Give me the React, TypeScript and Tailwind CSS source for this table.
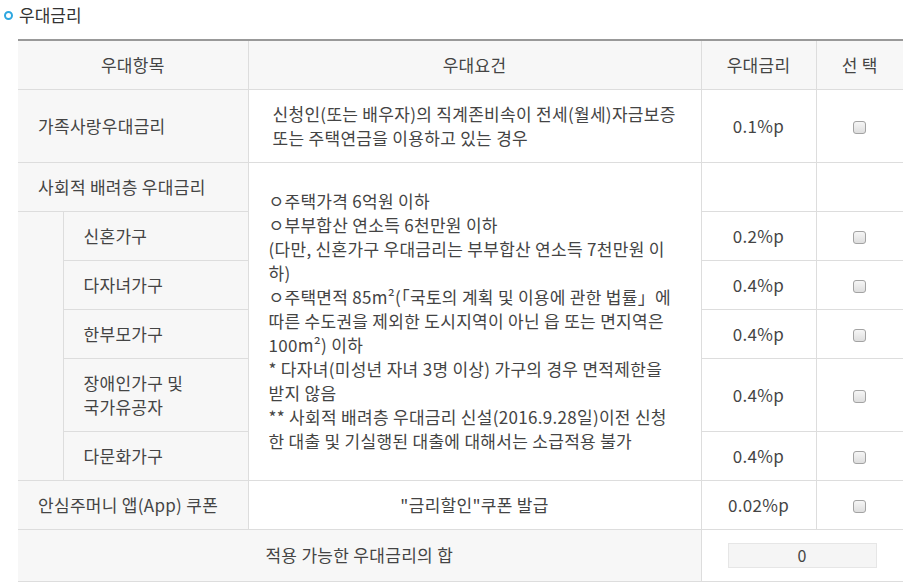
const FONT = { fontFamily: '"Noto Sans CJK KR", "Noto Sans", sans-serif' };

function Check() {
  return (
    <span className="inline-block w-[13px] h-[13px] rounded-[3px] border border-[#a3a3a3] bg-gradient-to-b from-[#f6f6f6] to-[#dedede] align-middle" />
  );
}

const SOCIAL = [
  { label: ["신혼가구"], rate: "0.2%p", h: "h-[49px]" },
  { label: ["다자녀가구"], rate: "0.4%p", h: "h-[49px]" },
  { label: ["한부모가구"], rate: "0.4%p", h: "h-[49px]" },
  { label: ["장애인가구 및", "국가유공자"], rate: "0.4%p", h: "h-[73px]" },
  { label: ["다문화가구"], rate: "0.4%p", h: "h-[49px]" },
];

const CONDITIONS = [
  "ㅇ주택가격 6억원 이하",
  "ㅇ부부합산 연소득 6천만원 이하",
  "(다만, 신혼가구 우대금리는 부부합산 연소득 7천만원 이",
  "하)",
  "ㅇ주택면적 85m²(「국토의 계획 및 이용에 관한 법률」에",
  "따른 수도권을 제외한 도시지역이 아닌 읍 또는 면지역은",
  "100m²) 이하",
  "* 다자녀(미성년 자녀 3명 이상) 가구의 경우 면적제한을",
  "받지 않음",
  "** 사회적 배려층 우대금리 신설(2016.9.28일)이전 신청",
  "한 대출 및 기실행된 대출에 대해서는 소급적용 불가",
];

export default function App() {
  return (
    <div className="w-[910px] h-[588px] bg-white text-[#444] overflow-hidden" style={FONT}>
      {/* title */}
      <div className="flex items-center h-[30px] pl-[4px] gap-[6px]">
        <span className="w-[9px] h-[9px] rounded-full border-[2.5px] border-[#2ea7e0] bg-white" />
        <span className="text-[17px] text-[#333] leading-[30px]">우대금리</span>
      </div>

      <table className="ml-[18px] mt-[9px] w-[885px] table-fixed border-collapse text-[17px] tracking-[0.3px] leading-[24px]">
        <colgroup>
          <col className="w-[45px]" />
          <col className="w-[185px]" />
          <col className="w-[453px]" />
          <col className="w-[115px]" />
          <col className="w-[87px]" />
        </colgroup>
        <thead>
          <tr className="h-[49px] border-t-2 border-t-[#999] bg-[#f7f7f7] border-b border-b-[#ddd]">
            <th colSpan={2} className="font-normal text-center border-r border-[#ddd]">우대항목</th>
            <th className="font-normal text-center border-r border-[#ddd]">우대요건</th>
            <th className="font-normal text-center border-r border-[#ddd]">우대금리</th>
            <th className="font-normal text-center">선 택</th>
          </tr>
        </thead>
        <tbody>
          <tr className="h-[73px] border-b border-[#ddd]">
            <td colSpan={2} className="bg-[#f7f7f7] px-5 border-r border-[#ddd]">가족사랑우대금리</td>
            <td className="pl-6 pr-4 border-r border-[#ddd] whitespace-nowrap">
              신청인(또는 배우자)의 직계존비속이 전세(월세)자금보증
              <br />또는 주택연금을 이용하고 있는 경우
            </td>
            <td className="text-center border-r border-[#ddd]">0.1%p</td>
            <td className="text-center"><Check /></td>
          </tr>
          <tr className="h-[49px] border-b border-[#ddd]">
            <td colSpan={2} className="bg-[#f7f7f7] px-5 border-r border-[#ddd]">사회적 배려층 우대금리</td>
            <td rowSpan={6} className="px-5 border-r border-[#ddd] align-middle">
              {CONDITIONS.map((l, i) => (
                <div key={i} className="whitespace-nowrap">{l}</div>
              ))}
            </td>
            <td className="border-r border-[#ddd]" />
            <td />
          </tr>
          {SOCIAL.map((s, i) => (
            <tr key={i} className={`${s.h} border-b border-[#ddd]`}>
              {i === 0 && (
                <td rowSpan={5} className="bg-[#f7f7f7] border-r border-[#ddd]" />
              )}
              <td className="bg-[#f7f7f7] px-5 border-r border-[#ddd]">
                {s.label.map((l, j) => (
                  <div key={j}>{l}</div>
                ))}
              </td>
              <td className="text-center border-r border-[#ddd]">{s.rate}</td>
              <td className="text-center"><Check /></td>
            </tr>
          ))}
          <tr className="h-[49px] border-b border-[#ddd]">
            <td colSpan={2} className="bg-[#f7f7f7] px-5 border-r border-[#ddd]">안심주머니 앱(App) 쿠폰</td>
            <td className="text-center border-r border-[#ddd]">"금리할인"쿠폰 발급</td>
            <td className="text-center border-r border-[#ddd]">0.02%p</td>
            <td className="text-center"><Check /></td>
          </tr>
          <tr className="h-[52px] border-b border-[#ddd]">
            <td colSpan={3} className="bg-[#f7f7f7] text-center border-r border-[#ddd]">적용 가능한 우대금리의 합</td>
            <td colSpan={2} className="pl-[26px]">
              <div className="w-[149px] h-[25px] bg-[#f5f5f5] border border-[#e6e6e6] flex items-center justify-center text-[16px]">
                0
              </div>
            </td>
          </tr>
        </tbody>
      </table>
    </div>
  );
}
